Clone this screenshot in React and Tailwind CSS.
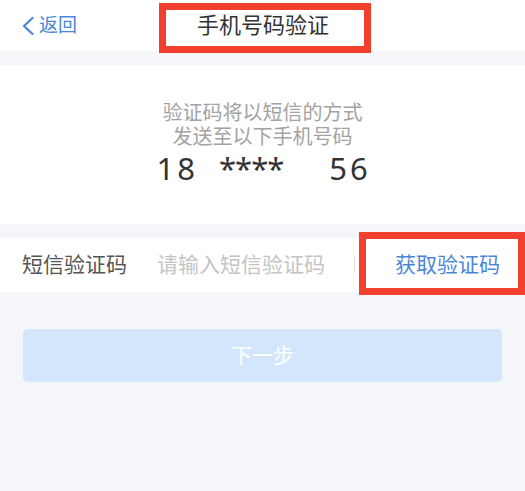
import React from "react";

const font = { fontFamily: '"Noto Sans", "Noto Sans CJK SC", sans-serif' };

function BackChevron() {
  return (
    <svg width="14" height="20" viewBox="0 0 14 20" fill="none">
      <path d="M11.5 2 L3 10 L11.5 18" stroke="#4a86d8" strokeWidth="2.2" strokeLinecap="round" strokeLinejoin="round" />
    </svg>
  );
}

export default function App() {
  return (
    <div className="relative w-[525px] h-[491px] bg-[#f5f6f9] overflow-hidden" style={font}>
      {/* header */}
      <div className="relative h-[51px] bg-white flex items-center">
        <div className="flex items-center pl-[21px] gap-[4px] text-[19px] text-[#4a86d8] leading-none">
          <BackChevron />
          <span className="pb-[1px]">返回</span>
        </div>
        <div className="absolute inset-x-0 top-0 h-[48px] flex items-center justify-center pl-[1px] text-[22px] text-[#333]">
          手机号码验证
        </div>
      </div>
      <div className="absolute left-[159px] top-[3px] w-[212px] h-[50px] border-[7px] border-[#f3402e]" />

      {/* info */}
      <div className="mt-[14px] h-[159px] bg-white flex flex-col items-center pt-[36px]">
        <div className="text-[20px] leading-[24px] text-[#a3a3a3] text-center">
          <div className="h-[24px]">验证码将以短信的方式</div>
          <div className="h-[24px]">发送至以下手机号码</div>
        </div>
        <div className="mt-[1px] w-[212px] flex items-center text-[31px] leading-[36px] text-[#333]">
          <span className="tracking-[3px]">18</span>
          <span className="ml-[21px] tracking-[-1px]">****</span>
          <span className="ml-[46px] tracking-[3px]">56</span>
        </div>
      </div>

      {/* code row */}
      <div className="relative mt-[14px] h-[54px] bg-white flex items-center text-[21px]">
        <span className="pl-[22px] w-[157px] text-[#555]">短信验证码</span>
        <span className="text-[#c4c4c4]">请输入短信验证码</span>
        <span className="ml-[29px] w-px h-[16px] bg-[#dcdcdc]" />
        <span className="ml-[40px] text-[#4a86d8]">获取验证码</span>
      </div>
      <div className="absolute left-[359px] top-[232px] w-[166px] h-[63px] border-[7px] border-[#f3402e]" />

      {/* button */}
      <div className="mx-[23px] mt-[37px] h-[53px] rounded-[5px] bg-[#d3e6fb] flex items-center justify-center text-[21px] text-white">
        下一步
      </div>
    </div>
  );
}
